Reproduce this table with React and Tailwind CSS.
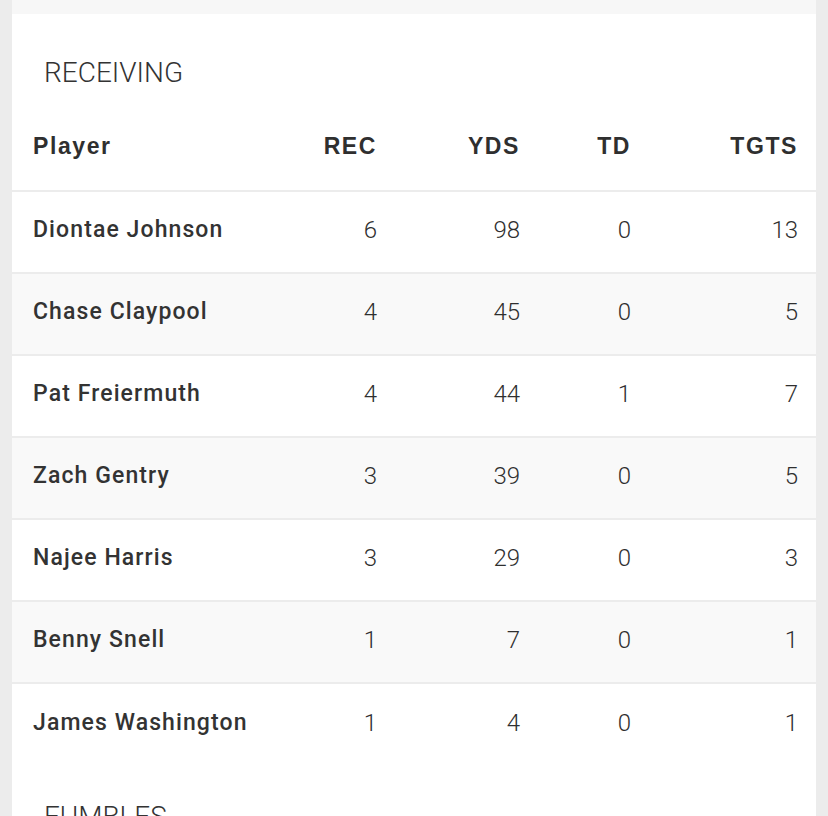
import React from 'react';

const rows = [
  { name: 'Diontae Johnson', rec: 6, yds: 98, td: 0, tgts: 13 },
  { name: 'Chase Claypool', rec: 4, yds: 45, td: 0, tgts: 5 },
  { name: 'Pat Freiermuth', rec: 4, yds: 44, td: 1, tgts: 7 },
  { name: 'Zach Gentry', rec: 3, yds: 39, td: 0, tgts: 5 },
  { name: 'Najee Harris', rec: 3, yds: 29, td: 0, tgts: 3 },
  { name: 'Benny Snell', rec: 1, yds: 7, td: 0, tgts: 1 },
  { name: 'James Washington', rec: 1, yds: 4, td: 0, tgts: 1 },
];

const cols = 'grid grid-cols-[230px_114px_143px_111px_167px] items-center pl-[21px] pr-[18px]';

const App = () => {
  return (
    <div className="w-[828px] h-[816px] overflow-hidden bg-[#ececec] px-[12px] font-['Liberation_Sans',sans-serif] text-[#2f2f2f]">
      <div className="h-full bg-white">
        {/* bottom of the card above */}
        <div className="h-[14px] bg-[#f7f7f7]"></div>

        <h2 className="pl-[32px] pt-[44px] text-[28px] leading-[30px] font-light text-[#333] font-['Roboto',sans-serif]">
          RECEIVING
        </h2>

        {/* header */}
        <div className={`${cols} h-[104px] pt-[14px] text-[23px] font-bold tracking-[1.6px] border-b-2 border-[#ececec]`}>
          <div>Player</div>
          <div className="text-right">REC</div>
          <div className="text-right">YDS</div>
          <div className="text-right">TD</div>
          <div className="text-right">TGTS</div>
        </div>

        {rows.map((r, i) => (
          <div
            key={r.name}
            className={`${cols} h-[82px] pb-[4px] ${i < rows.length - 1 ? 'border-b-2 border-[#ececec]' : ''} ${i % 2 === 1 ? 'bg-[#f9f9f9]' : 'bg-white'}`}
          >
            <div className="text-[23px] font-medium tracking-[1.1px] text-[#333] font-['Roboto',sans-serif]">{r.name}</div>
            <div className="text-right text-[24px] font-light font-['Roboto',sans-serif]">{r.rec}</div>
            <div className="text-right text-[24px] font-light font-['Roboto',sans-serif]">{r.yds}</div>
            <div className="text-right text-[24px] font-light font-['Roboto',sans-serif]">{r.td}</div>
            <div className="text-right text-[24px] font-light font-['Roboto',sans-serif]">{r.tgts}</div>
          </div>
        ))}

        <h2 className="pl-[32px] pt-[36px] text-[28px] leading-[30px] font-light text-[#333] font-['Roboto',sans-serif]">
          FUMBLES
        </h2>
      </div>
    </div>
  );
};

export default App;
